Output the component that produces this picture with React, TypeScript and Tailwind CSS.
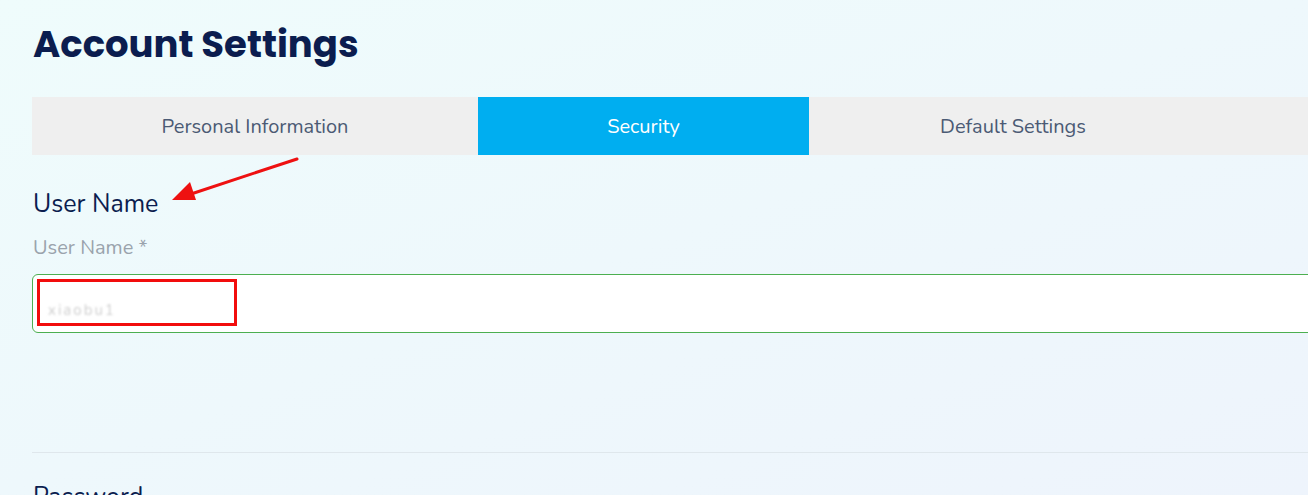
export default function App() {
  const tabs = [
    { label: 'Personal Information', w: 'w-[446px]', active: false },
    { label: 'Security', w: 'w-[331px]', active: true },
    { label: 'Default Settings', w: 'w-[408px]', active: false },
  ]

  return (
    <div className="h-[495px] w-[1308px] overflow-hidden bg-gradient-to-br from-[#effcfc] via-[#eef8fc] to-[#eef4fc] font-['Nunito','Lato',sans-serif]">
      <div className="relative w-[1500px] pl-[32px] pt-[22px]">
        <h1 className="ml-[1px] font-['Poppins','Inter',sans-serif] text-[37px] font-bold leading-[44px] text-[#0b1d4f]">
          Account Settings
        </h1>

        {/* Tabs */}
        <div className="mt-[31px] flex h-[58px] bg-[#efefef]">
          {tabs.map((t) => (
            <div
              key={t.label}
              className={`${t.w} flex items-center justify-center pt-[2px] text-[20px] ${
                t.active ? 'bg-[#00aef0] text-white' : 'text-[#4b5a74]'
              }`}
            >
              {t.label}
            </div>
          ))}
        </div>

        {/* User name */}
        <h2 className="ml-[1px] mt-[34px] text-[25px] leading-[30px] text-[#0b1d4f]">User Name</h2>
        <p className="ml-[1px] mt-[15px] text-[20px] leading-[28px] text-[#9aa3ac]">User Name *</p>
        <div className="relative mt-[12px] flex h-[59px] items-center overflow-hidden rounded-l-[6px] border border-[#4caf50] bg-white pl-[15px]">
          <span className="mt-[14px] text-[15px] tracking-[2px] text-[#cfcfcf] blur-[1px]">xiaobu1</span>
          <div className="absolute left-[4px] top-[4px] h-[47px] w-[200px] border-[3px] border-[#f20d0d]" />
        </div>

        <div className="mt-[119px] h-px bg-[#dfe7ec]" />
        <h2 className="ml-[1px] mt-[29px] text-[25px] leading-[30px] text-[#0b1d4f]">Password</h2>

        {/* annotation arrow */}
        <svg className="absolute left-[168px] top-[155px]" width="134" height="50" viewBox="0 0 134 50">
          <line x1="129" y1="4" x2="20" y2="40" stroke="#ee1111" strokeWidth="3" strokeLinecap="round" />
          <polygon points="4,45 22,27 28,45" fill="#ee1111" />
        </svg>
      </div>
    </div>
  )
}
